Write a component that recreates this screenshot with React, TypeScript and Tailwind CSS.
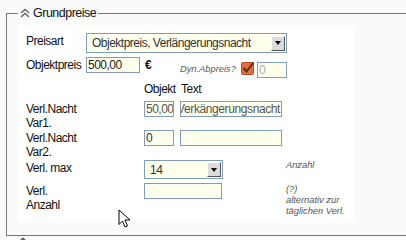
const inputCls =
  'h-[16px] border border-[#7f9db9] bg-[#ffffee] px-[1px] leading-[14px] overflow-hidden whitespace-nowrap';

const SelectArrow = () => (
  <div className="flex h-[15px] w-[14px] shrink-0 items-center justify-center border border-t-white border-l-white border-r-[#555] border-b-[#555] bg-[#dcdcdc]">
    <div className="h-0 w-0 border-x-[3px] border-t-[4px] border-x-transparent border-t-black" />
  </div>
);

const DoubleChevron = ({ color = '#666' }: { color?: string }) => (
  <svg width="10" height="10" viewBox="0 0 10 10" fill="none" stroke={color} strokeWidth="1.4">
    <polyline points="1,5 5,1.5 9,5" />
    <polyline points="1,9 5,5.5 9,9" />
  </svg>
);

const Checked = () => (
  <svg width="14" height="14" viewBox="0 0 14 14">
    <rect x="0.5" y="1.5" width="12" height="12" rx="1" fill="#e66b3f" stroke="#b8502c" />
    <polyline points="2.5,7 5.5,10.5 12.5,1.5" fill="none" stroke="#5a2e19" strokeWidth="2" />
  </svg>
);

const Cursor = () => (
  <svg width="14" height="20" viewBox="0 0 14 20" className="absolute left-[118px] top-[209px]">
    <path d="M1 1 L1 15.5 L4.5 12 L7 18 L9.5 17 L7 11 L12 11 Z" fill="#fff" stroke="#000" strokeWidth="1" strokeLinejoin="round" />
  </svg>
);

const small = "font-['Liberation_Sans',Arial,sans-serif] text-[9.3px] leading-[11px] italic tracking-normal text-[#555]";

export default function App() {
  return (
    <div className="relative h-[240px] w-[406px] overflow-hidden bg-[#fafafa] pt-[5px] font-['Liberation_Sans',Arial,sans-serif] text-[12px] tracking-[-0.5px] text-[#111]">
      <fieldset className="ml-[6px] w-[440px] border border-[#777] px-[11px] pt-[4px] pb-[12px]">
        <legend className="flex items-center gap-[3px] px-[2px] text-[12.5px] leading-[16px]">
          <DoubleChevron />
          <span>Grundpreise</span>
        </legend>

        <div className="h-[198px] w-[335px] bg-white pl-[8px] pt-[8px] leading-[14px]">
          {/* Preisart */}
          <div className="grid grid-cols-[60px_58px_36px_106px_1fr] items-start">
            <div className="pt-[1px]">Preisart</div>
            <div className="col-span-3 flex h-[20px] w-[201px] items-center justify-between border border-[#7f9db9] bg-[#ffffee] pl-[5px] pr-[1px] text-[#333]">
              <span>Objektpreis, Verlängerungsnacht</span>
              <SelectArrow />
            </div>
          </div>

          {/* Objektpreis */}
          <div className="mt-[4px] grid h-[21px] grid-cols-[60px_58px_36px_106px_1fr] items-start">
            <div className="pt-[1px]">Objektpreis</div>
            <div className={`${inputCls} w-[54px] text-[#222]`}>500,00</div>
            <div className="pl-[1px] pt-[1px] font-bold">€</div>
            <div className="col-span-2 flex items-start">
              <span className={`mt-[7px] w-[61px] ${small}`}>Dyn.Abpreis?</span>
              <div className="mt-[4px]">
                <Checked />
              </div>
              <div className={`${inputCls} mt-[5px] ml-[2px] w-[30px] text-[#aaa]`}>0</div>
            </div>
          </div>

          {/* Kopfzeile */}
          <div className="mt-[4px] grid grid-cols-[60px_58px_36px_106px_1fr]">
            <div className="col-start-3">Objekt</div>
            <div className="pl-[1px]">Text</div>
          </div>

          {/* Var1 */}
          <div className="mt-[5px] grid h-[28px] grid-cols-[60px_58px_36px_106px_1fr] items-start">
            <div className="pt-[1px]">
              Verl.Nacht
              <br />
              Var1.
            </div>
            <div className={`${inputCls} col-start-3 w-[30px] text-[#555]`}>50,00</div>
            <div className={`${inputCls} flex w-[102px] justify-end pr-[1px] text-[#555]`}>
              <span className="shrink-0 tracking-[-0.4px]">Verkängerungsnacht</span>
            </div>
          </div>

          {/* Var2 */}
          <div className="mt-[1px] grid h-[28px] grid-cols-[60px_58px_36px_106px_1fr] items-start">
            <div className="pt-[1px]">
              Verl.Nacht
              <br />
              Var2.
            </div>
            <div className={`${inputCls} col-start-3 w-[30px] text-[#333]`}>0</div>
            <div className={`${inputCls} w-[102px]`} />
          </div>

          {/* Verl. max */}
          <div className="mt-[2px] grid h-[19px] grid-cols-[60px_58px_36px_106px_1fr] items-start">
            <div className="pt-[1px]">Verl. max</div>
            <div className="col-span-2 col-start-3 flex h-[19px] w-[79px] items-center justify-between border border-[#7f9db9] bg-[#ffffee] pl-[5px] pr-[1px] text-[#333]">
              <span>14</span>
              <SelectArrow />
            </div>
            <div className={small}>Anzahl</div>
          </div>

          {/* Verl. Anzahl */}
          <div className="mt-[4px] grid grid-cols-[60px_58px_36px_106px_1fr] items-start">
            <div className="pt-[1px]">
              Verl.
              <br />
              Anzahl
            </div>
            <div className={`${inputCls} col-span-2 col-start-3 w-[78px]`} />
            <div className={`mt-[1px] ${small}`}>
              (?)
              <br />
              alternativ zur
              <br />
              täglichen Verl.
            </div>
          </div>
        </div>
      </fieldset>

      <div className="mt-[1px] pl-[18px]">
        <DoubleChevron color="#444" />
      </div>

      <Cursor />
    </div>
  );
}
